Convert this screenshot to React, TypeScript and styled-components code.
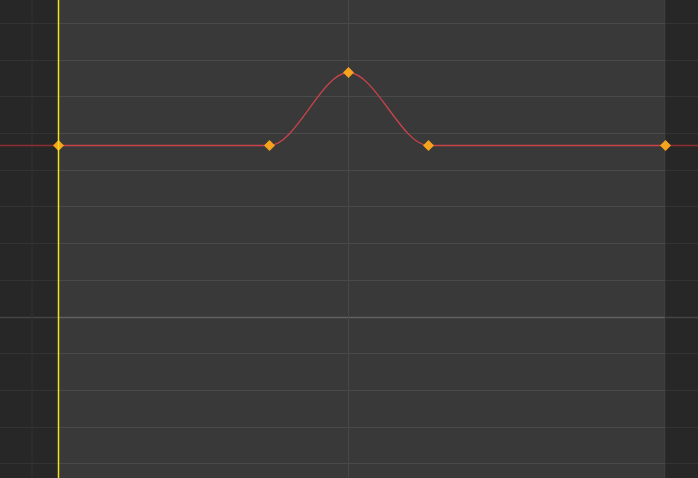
import React from 'react';
import styled, { createGlobalStyle } from 'styled-components';

const GlobalStyle = createGlobalStyle`
  html, body {
    margin: 0;
    padding: 0;
    background: #393939;
    overflow: hidden;
  }
`;

const Viewport = styled.div`
  width: 698px;
  height: 478px;
  background: #393939;
  display: flex;
`;

const Graph = styled.svg`
  display: block;
  flex: 1;
  height: 100%;
`;

const W = 698;
const H = 478;
const START = 58;
const END = 665;

const rows = [23, 60, 96, 133, 170, 206, 243, 280, 353, 390, 427, 463];
const cols = [32, 348.5, 665];

const keys: [number, number][] = [
  [58.5, 145.5],
  [269.5, 145.5],
  [348.5, 72.5],
  [428.5, 145.5],
  [665.5, 145.5],
];

const Diamond = ({ x, y }: { x: number; y: number }) => (
  <path d={`M${x} ${y - 5.5}L${x + 5.5} ${y}L${x} ${y + 5.5}L${x - 5.5} ${y}Z`} fill="#f5a21c" />
);

const curve =
  'M-10 145.5 L269.5 145.5 C295.5 145.5 322 72.5 348.5 72.5 C375 72.5 402 145.5 428.5 145.5 L710 145.5';

export default function App() {
  return (
    <>
      <GlobalStyle />
      <Viewport>
        <Graph viewBox={`0 0 ${W} ${H}`} width={W} height={H}>
          {rows.map((y) => (
            <line key={y} x1={0} x2={W} y1={y + 0.5} y2={y + 0.5} stroke="#4a4a4a" strokeWidth={1} />
          ))}
          <line x1={0} x2={W} y1={317.5} y2={317.5} stroke="#626262" strokeWidth={1.4} />
          {cols.map((x) => (
            <line key={x} x1={x} x2={x} y1={0} y2={H} stroke="#474747" strokeWidth={1} />
          ))}
          <path d={curve} fill="none" stroke="#c9434b" strokeWidth={1.3} />

          {/* outside of the frame range */}
          <rect x={0} y={0} width={START} height={H} fill="rgba(0,0,0,0.3)" />
          <rect x={END} y={0} width={W - END} height={H} fill="rgba(0,0,0,0.3)" />

          {keys.map(([x, y]) => (
            <Diamond key={x} x={x} y={y} />
          ))}

          {/* playhead */}
          <line x1={58.5} x2={58.5} y1={0} y2={H} stroke="#f2e21a" strokeWidth={1.5} />
        </Graph>
      </Viewport>
    </>
  );
}
